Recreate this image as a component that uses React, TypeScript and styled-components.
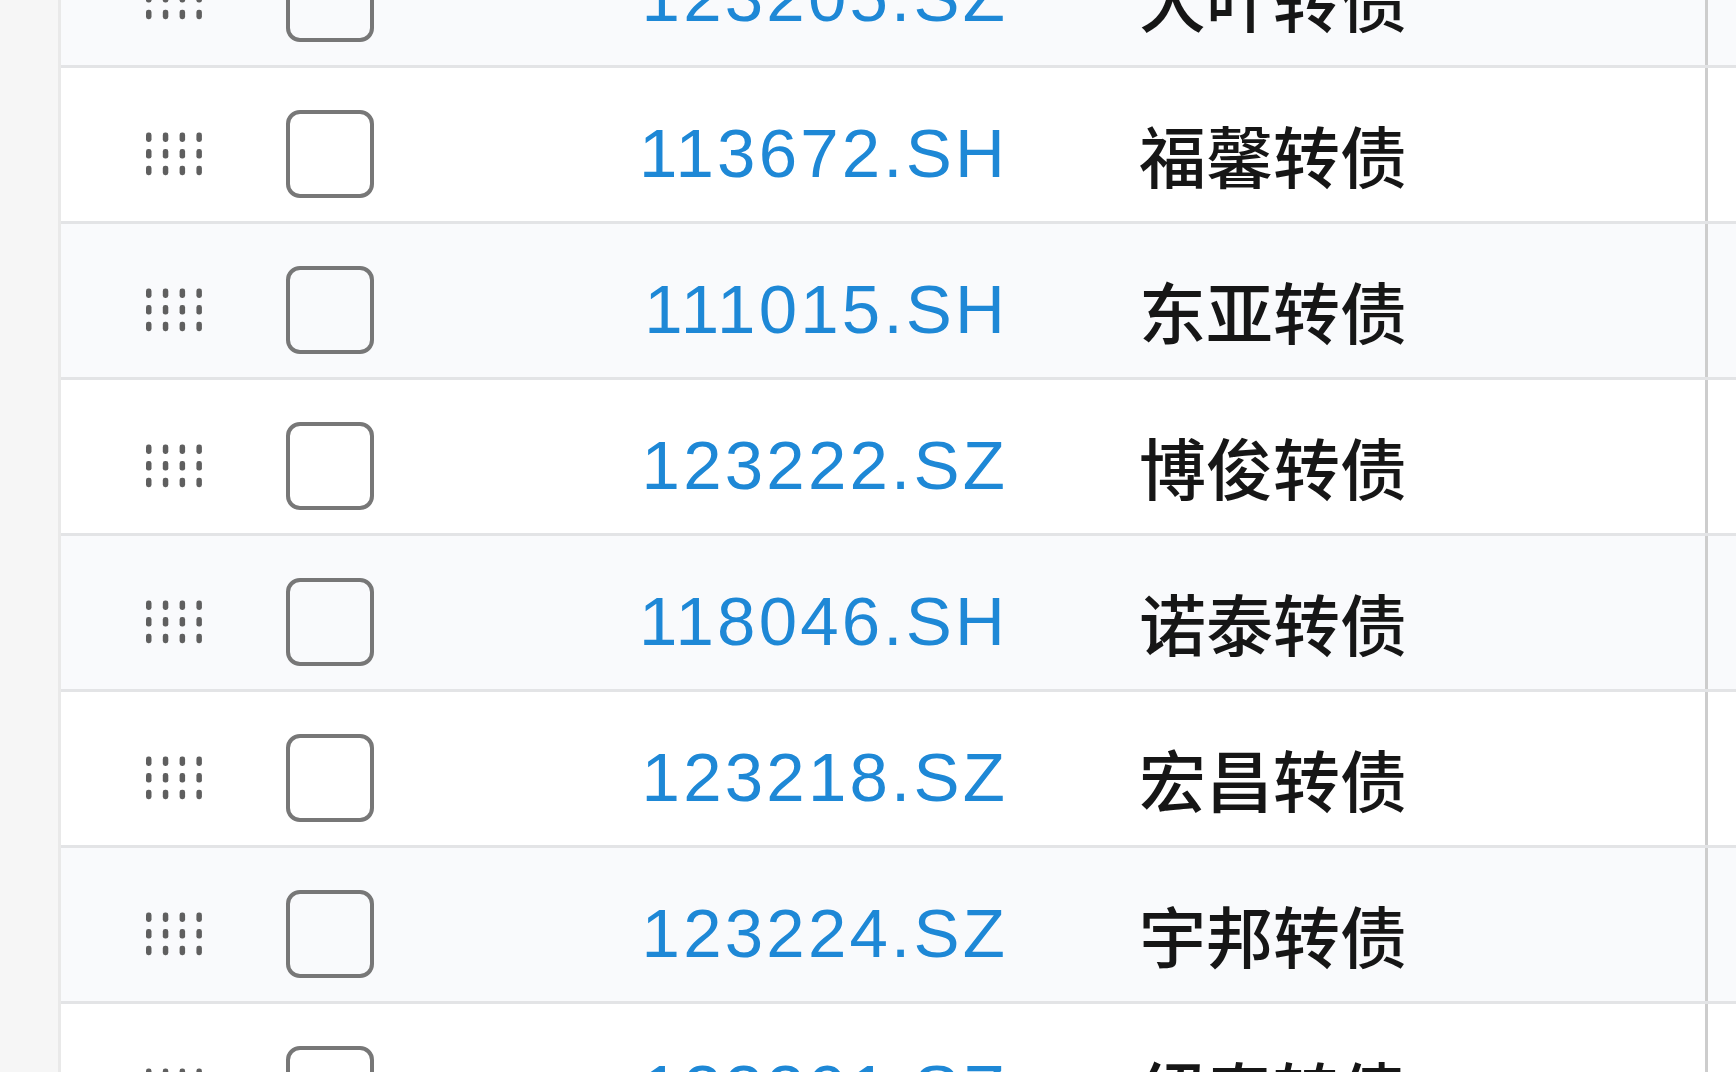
import { createGlobalStyle, styled } from "styled-components";

type Bond = {
  code: string;
  name: string;
};

const bonds: Bond[] = [
  { code: "123205.SZ", name: "大叶转债" },
  { code: "113672.SH", name: "福馨转债" },
  { code: "111015.SH", name: "东亚转债" },
  { code: "123222.SZ", name: "博俊转债" },
  { code: "118046.SH", name: "诺泰转债" },
  { code: "123218.SZ", name: "宏昌转债" },
  { code: "123224.SZ", name: "宇邦转债" },
  { code: "123201.SZ", name: "纽泰转债" },
];

const GlobalStyle = createGlobalStyle`
  html, body {
    margin: 0;
    padding: 0;
    height: 100%;
    overflow: hidden;
    background: #ffffff;
  }
  #root {
    height: 100%;
  }
`;

const DragHandle = () => (
  <HandleIcon width="56" height="44" viewBox="0 0 56 44">
    {[0, 1, 2].map((r) =>
      [0, 1, 2, 3].map((c) => (
        <rect
          key={`${r}-${c}`}
          x={c * 16.8}
          y={r * 16.6 + 0.5}
          width="5.5"
          height="9.5"
          rx="2.4"
          fill="#5f5f5f"
        />
      ))
    )}
  </HandleIcon>
);

const App = () => {
  return (
    <Page>
      <GlobalStyle />
      <Gutter />
      <TableArea>
        <Table>
          {bonds.map((bond, i) => (
            <Row key={bond.code} $striped={i % 2 === 0}>
              <MainCell>
                <DragHandle />
                <Checkbox type="button" aria-label={bond.code} />
                <Code>{bond.code}</Code>
                <Name>{bond.name}</Name>
              </MainCell>
              <ExtraCell />
            </Row>
          ))}
        </Table>
      </TableArea>
    </Page>
  );
};

export default App;

const Page = styled.div`
  display: flex;
  height: 100vh;
  overflow: hidden;
`;

const Gutter = styled.div`
  width: 58px;
  flex-shrink: 0;
  background: #f6f6f6;
  border-right: 3px solid #e9e9e9;
`;

const TableArea = styled.div`
  flex: 1;
  overflow: hidden;
`;

const Table = styled.div`
  margin-top: -88px;
  display: flex;
  flex-direction: column;
`;

const Row = styled.div<{ $striped: boolean }>`
  display: flex;
  height: 156px;
  box-sizing: border-box;
  border-bottom: 3px solid #e3e4e6;
  background: ${(p) => (p.$striped ? "#f9fafc" : "#ffffff")};
`;

const MainCell = styled.div`
  width: 1647px;
  flex-shrink: 0;
  box-sizing: border-box;
  display: flex;
  align-items: center;
  padding: 18px 0 0 85px;
  border-right: 3px solid #cdcdcd;
`;

const ExtraCell = styled.div`
  flex: 1;
`;

const HandleIcon = styled.svg`
  flex-shrink: 0;
  margin-right: 84px;
`;

const Checkbox = styled.button`
  width: 88px;
  height: 88px;
  flex-shrink: 0;
  box-sizing: border-box;
  padding: 0;
  background: transparent;
  border: 4px solid #777777;
  border-radius: 14px;
`;

const Code = styled.span`
  width: 634px;
  flex-shrink: 0;
  text-align: right;
  font-family: "Liberation Sans", Arial, sans-serif;
  font-size: 69px;
  letter-spacing: 3.2px;
  line-height: 1;
  color: #1e88d6;
`;

const Name = styled.span`
  margin-left: 131px;
  font-family: "Noto Sans CJK SC", sans-serif;
  font-size: 67px;
  font-weight: 500;
  line-height: 1;
  color: #161616;
`;
